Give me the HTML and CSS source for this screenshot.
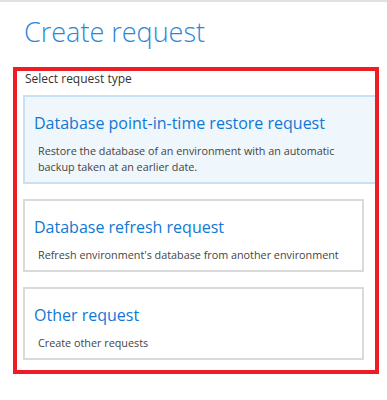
FILE: index.html
```html
<!DOCTYPE html>
<html lang="en-US">
  <head>
    <meta charset="UTF-8" />
    <meta name="viewport" content="width=device-width, initial-scale=1.0" />
    <title>Create request</title>
    <link rel="stylesheet" href="styles.css">
  </head>
  <body>
    <div class="topbar"></div>
    <h1 class="page-title">Create request</h1>

    <div class="highlight">
      <div class="section-label">Select request type</div>
      <div class="card-list">
        <div class="card selected">
          <div class="card-title">Database point-in-time restore request</div>
          <div class="card-desc">Restore the database of an environment with an automatic backup taken at an earlier date.</div>
        </div>
        <div class="card">
          <div class="card-title">Database refresh request</div>
          <div class="card-desc">Refresh environment's database from another environment</div>
        </div>
        <div class="card">
          <div class="card-title">Other request</div>
          <div class="card-desc">Create other requests</div>
        </div>
      </div>
    </div>
  </body>
</html>
```

FILE: styles.css
```css
body {
  margin: 0;
  font-family: "Open Sans", "Noto Sans", sans-serif;
  background: #fff;
}

.topbar {
  border-top: 2px solid #e1e1e1;
}

.page-title {
  margin: 10px 0 0 0;
  padding-left: 24px;
  font-size: 27px;
  font-weight: 300;
  line-height: 40px;
  color: #2b88d8;
}

/* annotation frame round the request types */
.highlight {
  box-sizing: border-box;
  margin: 15px 0 0 13px;
  width: 366px;
  border: 4px solid #ee1c25;
  padding: 0 0 10px 6px;
  overflow: hidden;
}

.section-label {
  margin-left: 2px;
  font-size: 12px;
  line-height: 16px;
  color: #333;
}

.card-list {
  display: flex;
  flex-direction: column;
  gap: 15px;
  margin-top: 8px;
}

.card {
  box-sizing: border-box;
  width: 341px;
  border: 2px solid #dadada;
  padding: 16px 9px 7px 9px;
  background: #fff;
}

.card.selected {
  width: 370px;
  border-color: #c7e0f4;
  background: #eff6fc;
}

.card-title {
  font-size: 16px;
  line-height: 20px;
  color: #0f78d4;
}

.card-desc {
  margin-top: 10px;
  padding-left: 4px;
  width: 304px;
  font-size: 10.8px;
  line-height: 16px;
  color: #444;
}
```
